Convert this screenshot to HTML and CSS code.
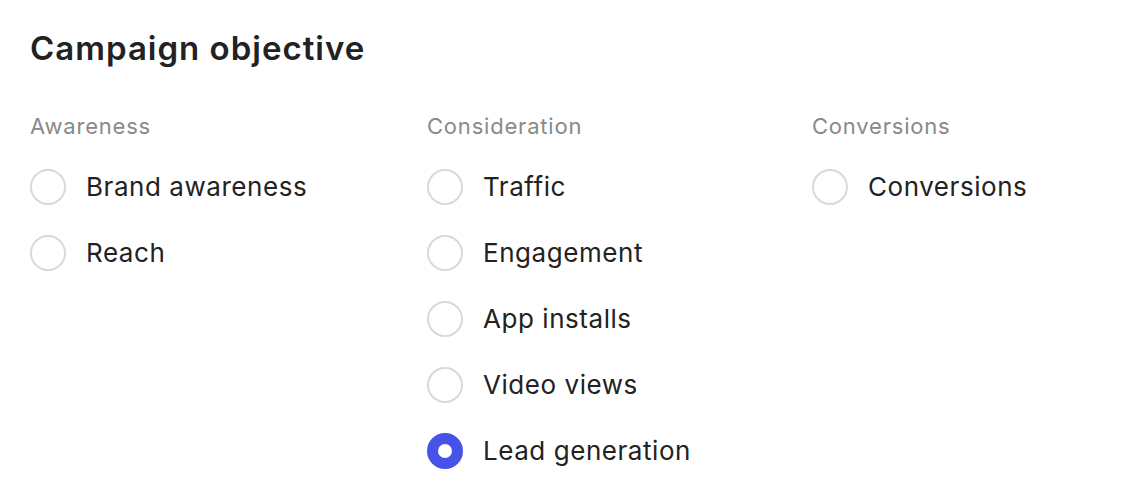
FILE: index.html
```html
<!DOCTYPE html>
<html>
<head>
<meta charset="utf-8">
<link rel="stylesheet" href="styles.css">
</head>
<body>
<div class="page">
  <h1 class="title">Campaign objective</h1>
  <div class="groups">
    <div class="group">
      <div class="group-label">Awareness</div>
      <label class="option"><span class="radio"></span><span class="text">Brand awareness</span></label>
      <label class="option"><span class="radio"></span><span class="text">Reach</span></label>
    </div>
    <div class="group">
      <div class="group-label">Consideration</div>
      <label class="option"><span class="radio"></span><span class="text">Traffic</span></label>
      <label class="option"><span class="radio"></span><span class="text">Engagement</span></label>
      <label class="option"><span class="radio"></span><span class="text">App installs</span></label>
      <label class="option"><span class="radio"></span><span class="text">Video views</span></label>
      <label class="option"><span class="radio checked"></span><span class="text">Lead generation</span></label>
    </div>
    <div class="group">
      <div class="group-label">Conversions</div>
      <label class="option"><span class="radio"></span><span class="text">Conversions</span></label>
    </div>
  </div>
</div>
</body>
</html>
```

FILE: styles.css
```css
html, body {
  margin: 0;
  padding: 0;
  background: #ffffff;
}
body {
  font-family: Inter, "Noto Sans", sans-serif;
  color: #222222;
}
.page {
  padding: 26px 30px 0 30px;
}
.title {
  margin: 0;
  font-size: 33px;
  font-weight: 600;
  line-height: 44px;
  color: #222222;
  letter-spacing: 1px;
}
.groups {
  display: grid;
  grid-template-columns: 397px 385px auto;
  margin-top: 40px;
}
.group {
  display: flex;
  flex-direction: column;
  gap: 30px;
}
.group-label {
  font-size: 22px;
  line-height: 32px;
  color: #8a8a8a;
  letter-spacing: 0.8px;
  margin-bottom: -3px;
}
.option {
  display: flex;
  align-items: center;
  gap: 20px;
  height: 36px;
}
.radio {
  box-sizing: border-box;
  width: 36px;
  height: 36px;
  border-radius: 50%;
  border: 2px solid #d9d9d9;
  background: #ffffff;
  flex: none;
}
.radio.checked {
  border: 11px solid #4652e8;
}
.text {
  font-size: 26px;
  line-height: 36px;
  color: #222222;
  letter-spacing: 0.55px;
}
```
